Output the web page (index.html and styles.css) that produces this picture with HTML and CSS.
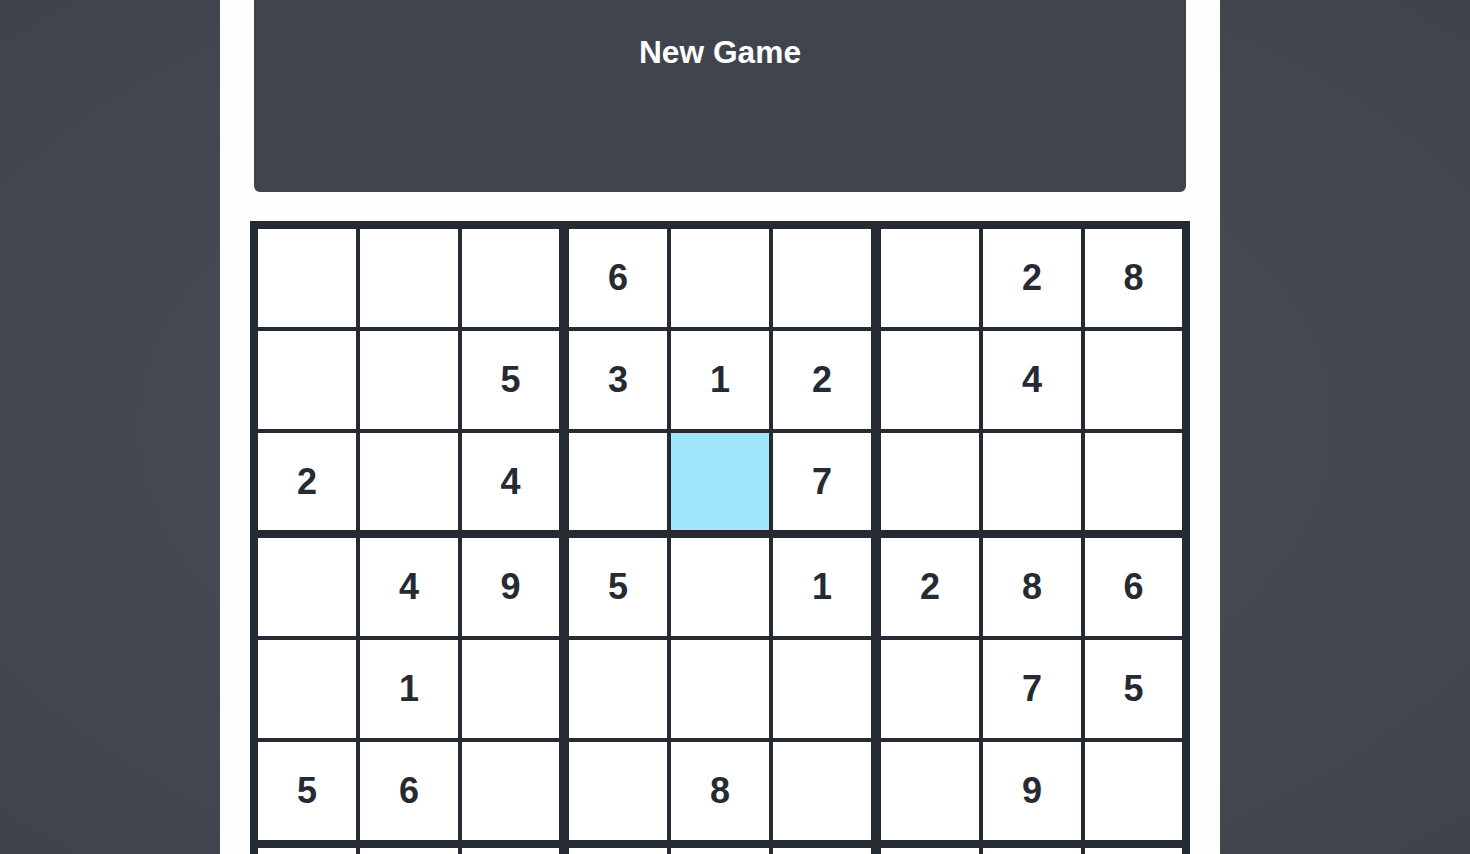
FILE: index.html
```html
<!DOCTYPE html>
<html lang="en">
<head>
<meta charset="utf-8">
<title>Sudoku</title>
<link rel="stylesheet" href="styles.css">
</head>
<body>
<main class="panel">
  <button class="new-game" type="button">New Game</button>
  <div class="board">
    <div class="box">
      <div class="cell"></div><div class="cell"></div><div class="cell"></div>
      <div class="cell"></div><div class="cell"></div><div class="cell">5</div>
      <div class="cell">2</div><div class="cell"></div><div class="cell">4</div>
    </div>
    <div class="box box-mid">
      <div class="cell">6</div><div class="cell"></div><div class="cell"></div>
      <div class="cell">3</div><div class="cell">1</div><div class="cell">2</div>
      <div class="cell"></div><div class="cell selected"></div><div class="cell">7</div>
    </div>
    <div class="box">
      <div class="cell"></div><div class="cell">2</div><div class="cell">8</div>
      <div class="cell"></div><div class="cell">4</div><div class="cell"></div>
      <div class="cell"></div><div class="cell"></div><div class="cell"></div>
    </div>

    <div class="box">
      <div class="cell"></div><div class="cell">4</div><div class="cell">9</div>
      <div class="cell"></div><div class="cell">1</div><div class="cell"></div>
      <div class="cell">5</div><div class="cell">6</div><div class="cell"></div>
    </div>
    <div class="box box-mid">
      <div class="cell">5</div><div class="cell"></div><div class="cell">1</div>
      <div class="cell"></div><div class="cell"></div><div class="cell"></div>
      <div class="cell"></div><div class="cell">8</div><div class="cell"></div>
    </div>
    <div class="box">
      <div class="cell">2</div><div class="cell">8</div><div class="cell">6</div>
      <div class="cell"></div><div class="cell">7</div><div class="cell">5</div>
      <div class="cell"></div><div class="cell">9</div><div class="cell"></div>
    </div>

    <div class="box">
      <div class="cell"></div><div class="cell"></div><div class="cell">7</div>
      <div class="cell">9</div><div class="cell"></div><div class="cell"></div>
      <div class="cell"></div><div class="cell">5</div><div class="cell"></div>
    </div>
    <div class="box box-mid">
      <div class="cell"></div><div class="cell">4</div><div class="cell"></div>
      <div class="cell">2</div><div class="cell"></div><div class="cell">6</div>
      <div class="cell"></div><div class="cell"></div><div class="cell">3</div>
    </div>
    <div class="box">
      <div class="cell">1</div><div class="cell"></div><div class="cell"></div>
      <div class="cell"></div><div class="cell"></div><div class="cell">8</div>
      <div class="cell">4</div><div class="cell"></div><div class="cell"></div>
    </div>
  </div>
</main>
</body>
</html>
```

FILE: styles.css
```css
html, body {
  margin: 0;
  padding: 0;
}

body {
  min-height: 100vh;
  padding-right: 30px;
  box-sizing: border-box;
  background: radial-gradient(ellipse at 50% 50%, #4b4e57 0%, #464951 55%, #40434b 100%);
  background-attachment: fixed;
  font-family: "Liberation Sans", Arial, sans-serif;
}

.panel {
  width: 1000px;
  margin: 0 auto;
  min-height: 100vh;
  background: #fefefe;
  padding: 0 30px 40px;
  box-sizing: border-box;
}

.new-game {
  display: block;
  box-sizing: border-box;
  width: 932px;
  margin: 0 4px 29px;
  padding: 34px 0 122px;
  border: none;
  border-radius: 0 0 6px 6px;
  background: #40444c;
  color: #ffffff;
  font-family: "Liberation Sans", Arial, sans-serif;
  font-weight: 700;
  font-size: 31.7px;
  line-height: 36px;
  text-align: center;
  cursor: pointer;
}

.board {
  display: grid;
  grid-template-columns: 301px 302px 301px;
  grid-template-rows: 301px 302px 301px;
  column-gap: 10px;
  row-gap: 8px;
  width: 940px;
  box-sizing: border-box;
  padding: 8px;
  background: #262a33;
}

.box {
  display: grid;
  grid-template-columns: 98px 98px 97px;
  grid-template-rows: 98px 98px 97px;
  gap: 4px;
}

.box-mid {
  grid-template-columns: 98px 98px 98px;
}

.board > .box:nth-child(n+4):nth-child(-n+6) {
  grid-template-rows: 98px 98px 98px;
}

.cell {
  display: flex;
  align-items: center;
  justify-content: center;
  background: #ffffff;
  color: #262a33;
  font-family: "Liberation Sans", Arial, sans-serif;
  font-weight: 700;
  font-size: 36px;
}

.cell.selected {
  background: #a1e7fc;
}
```
